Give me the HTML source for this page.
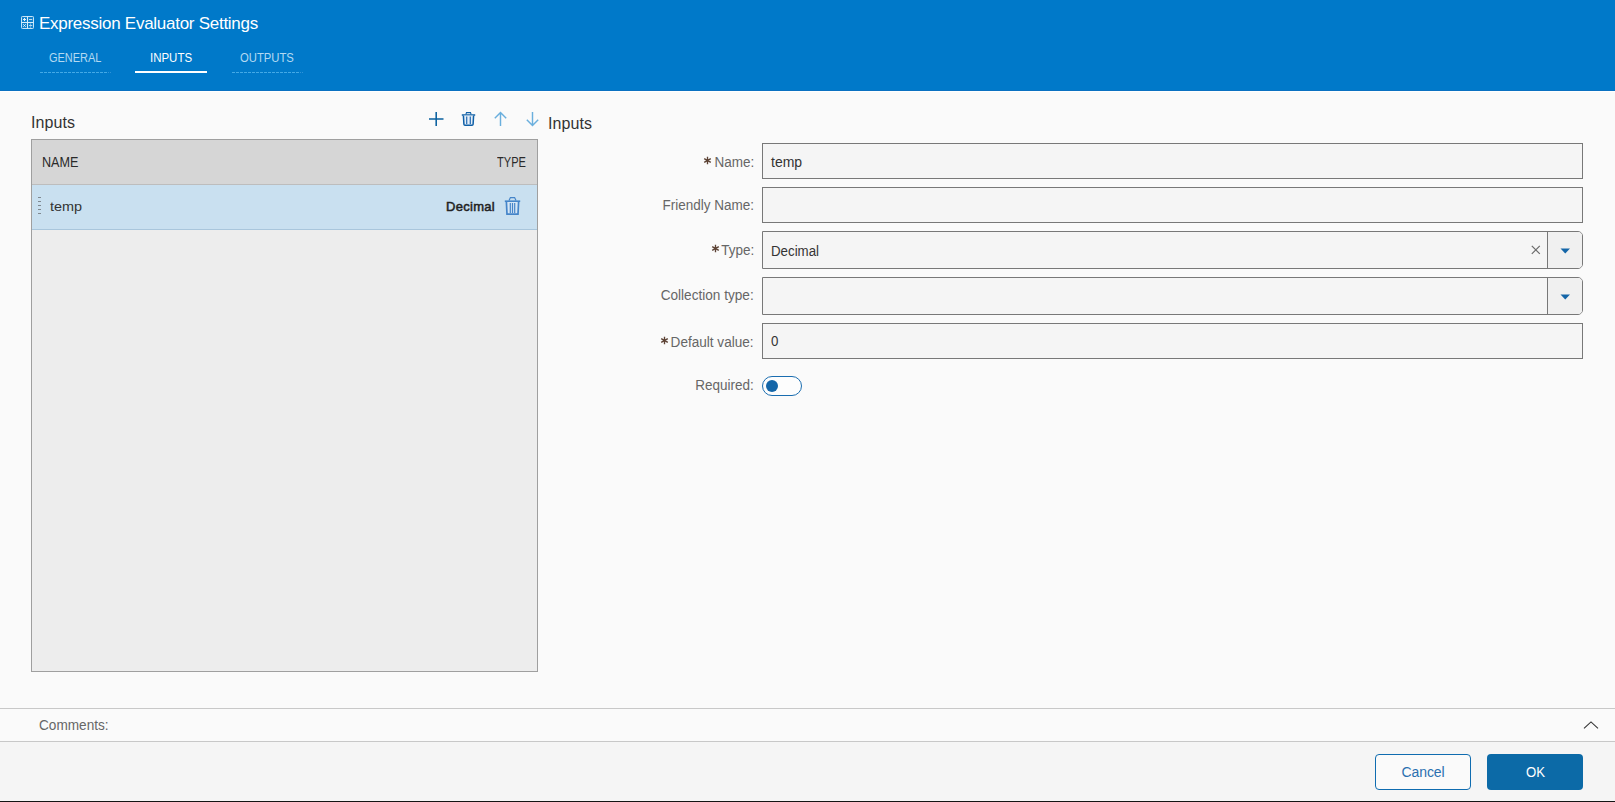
<!DOCTYPE html>
<html>
<head>
<meta charset="utf-8">
<title>Expression Evaluator Settings</title>
<style>
html,body{margin:0;padding:0;}
body{width:1615px;height:802px;overflow:hidden;background:#fafafa;font-family:"Liberation Sans",sans-serif;position:relative;color:#333;}
.abs{position:absolute;white-space:nowrap;line-height:1;}
#hdr{position:absolute;left:0;top:0;width:1615px;height:90px;background:#0079c9;}
#hdrline{position:absolute;left:0;top:90px;width:1615px;height:1px;background:#0a71c1;box-shadow:0 1px 0 #fff;}
.tab{position:absolute;top:51px;font-size:12px;transform-origin:0 50%;color:#b3d9f2;white-space:nowrap;line-height:14px;}
.dash{position:absolute;top:72px;height:1px;width:68px;background:repeating-linear-gradient(90deg,#43a9e6 0,#43a9e6 3px,transparent 3px,transparent 4px);}
.dash:after{content:"";position:absolute;left:68px;top:0;width:1px;height:1px;background:#2f93d8;box-shadow:2px 0 0 #2f93d8;}
#tbl{position:absolute;left:31px;top:139px;width:505px;height:531px;border:1px solid #9f9f9f;background:#ededed;}
#th{position:absolute;left:0;top:0;width:505px;height:44px;background:#d6d6d6;border-bottom:1px solid #bdbdbd;}
#tr{position:absolute;left:0;top:45px;width:505px;height:44px;background:#c9e0f0;border-bottom:1px solid #a9c6dc;}
.lbl{position:absolute;white-space:nowrap;font-size:14px;color:#666;line-height:16px;text-align:right;right:861px;transform-origin:100% 50%;transform:scaleX(0.964);}
.astk{position:absolute;width:9px;height:9px;}
.ast{color:#5a4632;}
.inp{position:absolute;left:762px;width:819px;height:34px;border:1px solid #787878;background:#f5f5f5;}
.cmb{position:absolute;left:762px;width:819px;height:36px;border:1px solid #787878;background:#f5f5f5;border-radius:0 5px 5px 0;}
.cmb .btn{position:absolute;right:0;top:0;width:34px;height:36px;border-left:1px solid #787878;background:#f0f0f0;border-radius:0 4px 4px 0;}
.val{position:absolute;left:771px;font-size:14px;transform-origin:0 50%;color:#333;white-space:nowrap;line-height:16px;}
</style>
</head>
<body>
<!-- header -->
<div id="hdr"></div>
<div id="hdrline"></div>
<svg class="abs" style="left:21px;top:16px" width="13" height="13" viewBox="0 0 13 13">
  <rect x="0.5" y="0.5" width="12" height="12" rx="0.8" fill="rgba(255,255,255,0.08)" stroke="#c6e4f7" stroke-width="1"/>
  <path d="M0.5 6.5H12.5M6.5 0.5V12.5" stroke="#d9eefa" stroke-width="1" fill="none"/>
  <path d="M2 3.5H5M3.5 2V5" stroke="#e8f5fc" stroke-width="1" fill="none"/>
  <path d="M8 3.5H11.2" stroke="#bfe0f6" stroke-width="1" fill="none"/>
  <path d="M2.2 8.2L4.8 10.8M4.8 8.2L2.2 10.8" stroke="#e8f5fc" stroke-width="0.9" fill="none"/>
  <path d="M8 9.5H11.2" stroke="#bfe0f6" stroke-width="0.9" fill="none"/>
  <rect x="9" y="7.6" width="1" height="1" fill="#a8d5f2"/><rect x="9" y="10.5" width="1" height="1" fill="#a8d5f2"/>
</svg>
<div class="abs" id="title" style="left:39px;top:14px;font-size:17px;line-height:20px;color:#fff;letter-spacing:-0.27px;">Expression Evaluator Settings</div>

<div class="tab" id="t1" style="left:49px;transform:scaleX(0.915);">GENERAL</div>
<div class="tab" id="t2" style="left:150px;color:#fff;transform:scaleX(0.955);">INPUTS</div>
<div class="tab" id="t3" style="left:240px;transform:scaleX(0.94);">OUTPUTS</div>
<div class="dash" style="left:40px;"></div>
<div class="abs" style="left:135px;top:71px;width:72px;height:2px;background:#fff;"></div>
<div class="dash" style="left:232px;"></div>

<!-- left panel -->
<div class="abs" id="h1" style="left:31px;top:113px;font-size:16px;line-height:20px;color:#333;letter-spacing:0.08px;">Inputs</div>
<!-- toolbar icons -->
<svg class="abs" style="left:428px;top:111px" width="16" height="16" viewBox="0 0 16 16"><path d="M1 8H15.5M8.2 1V15" stroke="#0a609f" stroke-width="1.55" fill="none"/></svg>
<svg class="abs" style="left:461px;top:111px" width="15" height="16" viewBox="0 0 15 16">
  <path d="M0.8 4H14.2" stroke="#0f5fa6" stroke-width="1.5" fill="none"/>
  <path d="M4.9 3.4L5.5 1.6H9.5L10.1 3.4" stroke="#0f5fa6" stroke-width="1.1" fill="none"/>
  <path d="M2.4 4.5L2.9 13.2Q3 14.3 4 14.3H11Q12 14.3 12.1 13.2L12.6 4.5" stroke="#0f5fa6" stroke-width="1.5" fill="#e4eef8"/>
  <path d="M5.7 5.4V13M9.3 5.4V13" stroke="#2a6fb5" stroke-width="1.25" fill="none"/>
</svg>
<svg class="abs" style="left:493px;top:111px" width="15" height="16" viewBox="0 0 15 16"><path d="M7.5 15V1.5M1.8 7.2L7.5 1.5L13.2 7.2" stroke="#6aafdd" stroke-width="1.45" fill="none"/></svg>
<svg class="abs" style="left:525px;top:111px" width="15" height="16" viewBox="0 0 15 16"><path d="M7.5 1V14.5M1.8 8.8L7.5 14.5L13.2 8.8" stroke="#6aafdd" stroke-width="1.45" fill="none"/></svg>

<div id="tbl">
  <div id="th"></div>
  <div id="tr"></div>
</div>
<div class="abs" id="cname" style="left:42px;top:154px;transform-origin:0 50%;transform:scaleX(0.9);font-size:14px;line-height:16px;color:#2a2a2a;">NAME</div>
<div class="abs" id="ctype" style="left:497.2px;top:154px;transform-origin:0 50%;transform:scaleX(0.79);font-size:14px;line-height:16px;color:#2a2a2a;">TYPE</div>
<!-- drag handle -->
<div class="abs" style="left:38px;top:197px;width:3px;height:1px;background:#7f8890;box-shadow:0 4px 0 #7f8890,0 8px 0 #7f8890,0 12px 0 #7f8890,0 16px 0 #7f8890;"></div>
<div class="abs" id="rtemp" style="left:50px;top:199px;transform-origin:0 50%;transform:scaleX(1.07);font-size:13.5px;line-height:16px;color:#333;">temp</div>
<div class="abs" id="rdec" style="left:446px;top:199px;font-size:13px;line-height:16px;color:#222;-webkit-text-stroke:0.5px #222;letter-spacing:0.3px;">Decimal</div>
<svg class="abs" style="left:504px;top:196px" width="17" height="20" viewBox="0 0 17 20">
  <path d="M0.8 5.2H16.2" stroke="#4585c9" stroke-width="1.6" fill="none"/>
  <path d="M5 4.6L6.4 1.6H10.6L12 4.6" stroke="#4585c9" stroke-width="1.2" fill="none"/>
  <path d="M2.4 6L3 18.2H14L14.6 6" stroke="#4585c9" stroke-width="1.7" fill="#d5e6f5"/>
  <path d="M6.3 7V17M8.5 7V17M10.7 7V17" stroke="#4585c9" stroke-width="1.2" fill="none"/>
</svg>

<!-- right panel -->
<div class="abs" id="h2" style="left:548px;top:114px;font-size:16px;line-height:20px;color:#333;letter-spacing:0.08px;">Inputs</div>

<svg class="astk" style="left:703px;top:156px" viewBox="0 0 9 9"><path d="M4.5 0.7V8.3M1.2 2.6L7.8 6.4M7.8 2.6L1.2 6.4" stroke="#5c4234" stroke-width="1.35" fill="none"/></svg>
<div class="lbl" id="l1" style="top:154px;">Name:</div>
<div class="inp" style="top:143px;"></div>
<div class="val" id="v1" style="top:154px;transform:scaleX(1.0);">temp</div>

<div class="lbl" id="l2" style="top:197px;">Friendly Name:</div>
<div class="inp" style="top:187px;"></div>

<svg class="astk" style="left:710.5px;top:244px" viewBox="0 0 9 9"><path d="M4.5 0.7V8.3M1.2 2.6L7.8 6.4M7.8 2.6L1.2 6.4" stroke="#5c4234" stroke-width="1.35" fill="none"/></svg>
<div class="lbl" id="l3" style="top:242px;">Type:</div>
<div class="cmb" style="top:231px;"><div class="btn"></div></div>
<div class="val" id="v3" style="top:243px;transform:scaleX(0.95);">Decimal</div>
<svg class="abs" style="left:1531px;top:245px" width="10" height="10" viewBox="0 0 10 10"><path d="M0.8 0.8L8.8 8.8M8.8 0.8L0.8 8.8" stroke="#6a6a6a" stroke-width="1.2" fill="none"/></svg>
<svg class="abs" style="left:1560px;top:248px" width="11" height="6" viewBox="0 0 11 6"><path d="M0.5 0.5H10L5.25 5.5Z" fill="#1466a8"/></svg>

<div class="lbl" id="l4" style="top:287px;transform:scaleX(0.972);">Collection type:</div>
<div class="cmb" style="top:277px;"><div class="btn"></div></div>
<svg class="abs" style="left:1560px;top:294px" width="11" height="6" viewBox="0 0 11 6"><path d="M0.5 0.5H10L5.25 5.5Z" fill="#1466a8"/></svg>

<svg class="astk" style="left:659.5px;top:336px" viewBox="0 0 9 9"><path d="M4.5 0.7V8.3M1.2 2.6L7.8 6.4M7.8 2.6L1.2 6.4" stroke="#5c4234" stroke-width="1.35" fill="none"/></svg>
<div class="lbl" id="l5" style="top:334px;transform:scaleX(0.97);">Default value:</div>
<div class="inp" style="top:323px;"></div>
<div class="val" id="v5" style="top:333px;transform:scaleX(0.95);">0</div>

<div class="lbl" id="l6" style="top:377px;">Required:</div>
<div class="abs" style="left:762px;top:376px;width:38px;height:18px;border:1px solid #1a6db0;border-radius:10px;background:#fdfdfd;"></div>
<div class="abs" style="left:766px;top:380px;width:12px;height:12px;border-radius:6px;background:#1466a8;"></div>

<!-- comments -->
<div class="abs" style="left:0;top:708px;width:1615px;height:1px;background:#c8c8c8;"></div>
<div class="abs" id="cm" style="left:39px;top:717px;font-size:14px;line-height:16px;color:#666;transform-origin:0 50%;transform:scaleX(0.972);">Comments:</div>
<svg class="abs" style="left:1582px;top:719px" width="18" height="12" viewBox="0 0 18 12"><path d="M2 9.3L9 2.9L16 9.3" stroke="#333" stroke-width="1.1" fill="none"/></svg>
<div class="abs" style="left:0;top:741px;width:1615px;height:1px;background:#c8c8c8;"></div>

<!-- footer -->
<div class="abs" style="left:0;top:742px;width:1615px;height:59px;background:#f5f5f5;"></div>
<div class="abs" style="left:1375px;top:754px;width:94px;height:34px;border:1px solid #0f6cb0;border-radius:4px;background:#fafafa;"></div>
<div class="abs" id="bc" style="left:1401.5px;top:763px;letter-spacing:-0.1px;font-size:14px;line-height:18px;color:#2a70b0;">Cancel</div>
<div class="abs" style="left:1487px;top:754px;width:96px;height:36px;border-radius:4px;background:#0c6aa7;"></div>
<div class="abs" id="bo" style="left:1525.5px;top:763px;transform-origin:0 50%;transform:scaleX(0.94);font-size:14px;line-height:18px;color:#fff;">OK</div>
<div class="abs" style="left:0;top:801px;width:1615px;height:1px;background:#141414;"></div>
</body>
</html>
